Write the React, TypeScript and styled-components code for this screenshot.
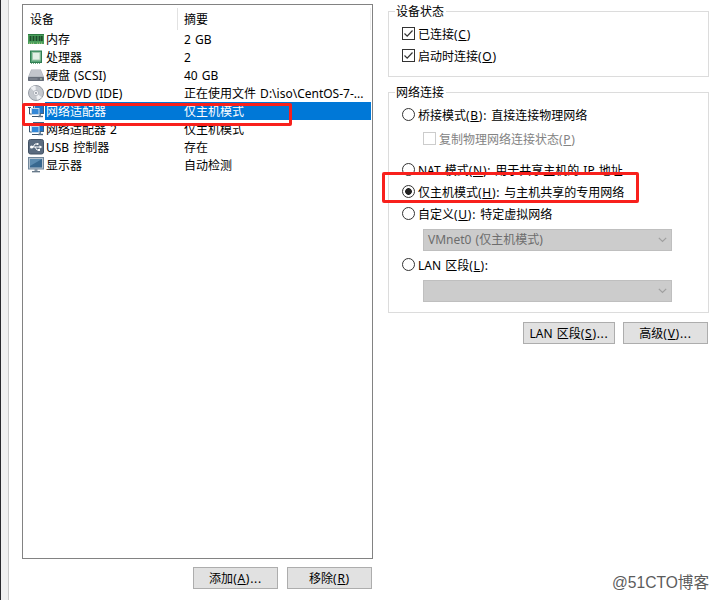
import { useState } from "react";
import type { ReactNode } from "react";
import styled, { createGlobalStyle } from "styled-components";

type Device = { icon: ReactNode; name: string; summary: string };

const MemoryIcon = () => (
  <svg width="16" height="16" viewBox="0 0 16 16">
    <rect x="0" y="3" width="16" height="10" fill="#4a9e5b" />
    <path d="M0 3.5h16" stroke="#2c7a40" />
    <path d="M2.5 5v5M5.5 5v5M8.5 5v5M11.5 5v5M13.8 5v5" stroke="#1d4d2b" strokeWidth="1.8" />
    <path d="M1 12.2h6M9 12.2h6" stroke="#b8cf8c" strokeDasharray="1 1" />
  </svg>
);

const CpuIcon = () => (
  <svg width="16" height="16" viewBox="0 0 16 16">
    <rect x="2.5" y="2" width="11" height="11.5" fill="#5aa678" stroke="#2f7d52" />
    <rect x="4.5" y="3.5" width="7.5" height="7.5" fill="#e3efe6" stroke="#a2c8af" />
    <path d="M3 14.5h10" stroke="#74a987" strokeDasharray="1 1" />
  </svg>
);

const DiskIcon = () => (
  <svg width="16" height="16" viewBox="0 0 16 16">
    <path d="M3.2 2.5h9.6L16 10v3.5H0V10z" fill="#a9aeb7" />
    <path d="M3.6 3h8.8l2.8 6.6H.8z" fill="#c2c5cc" />
    <rect x="0" y="10" width="16" height="4" rx="0.8" fill="#666d79" />
    <path d="M1.5 12h8" stroke="#8e95a0" />
    <path d="M12 12h2" stroke="#b7d8b4" />
  </svg>
);

const DiscIcon = () => (
  <svg width="16" height="16" viewBox="0 0 16 16">
    <circle cx="8" cy="8" r="7.5" fill="#c4c8ce" stroke="#959ba4" />
    <path d="M8 8L2.5 3a7 7 0 0 1 5-2.2zM8 8l5.8 4.2a7 7 0 0 1-4.8 2.6z" fill="#eff1f4" />
    <circle cx="8" cy="8" r="2.6" fill="#f2f3f5" stroke="#a6abb3" strokeWidth="0.7" />
    <circle cx="8" cy="8" r="1" fill="#8f959e" />
  </svg>
);

const NetworkIcon = () => (
  <svg width="16" height="16" viewBox="0 0 16 16">
    <rect x="5.5" y="1.5" width="10" height="9" fill="#1f74c8" stroke="#3d6285" />
    <path d="M6.5 9.5v-7h8" fill="none" stroke="#9fc4e6" />
    <path d="M10 13.5h5" stroke="#48647f" strokeWidth="1.4" />
    <path d="M12 11v2.5" stroke="#6d879f" strokeWidth="2" />
    <rect x="3.5" y="5.5" width="7.5" height="6" fill="#3387d6" stroke="#c3d8ea" />
    <path d="M0 4.5h3M1.5 4.5V11h2M4 13.5h6" fill="none" stroke="#39546e" />
  </svg>
);

const UsbIcon = () => (
  <svg width="16" height="16" viewBox="0 0 16 16">
    <rect x="0.5" y="0.5" width="15" height="14.5" rx="2" fill="#5a6b7f" stroke="#435264" />
    <path d="M3 8h9M5 8l2-3h2M7 8l2 3h2" fill="none" stroke="#fff" />
    <circle cx="3.6" cy="8" r="1.6" fill="#fff" />
    <path d="M11.5 6.2L14.3 8l-2.8 1.8z" fill="#fff" />
    <circle cx="9.6" cy="5" r="1.1" fill="#fff" />
    <rect x="10" y="10" width="2" height="2" fill="#fff" />
  </svg>
);

const DisplayIcon = () => (
  <svg width="16" height="16" viewBox="0 0 16 16">
    <rect x="0.5" y="0.5" width="15" height="11.5" fill="#b6c3cf" stroke="#71879b" />
    <rect x="2" y="2" width="12" height="8.5" fill="#38688f" />
    <path d="M2 2h12L2 9z" fill="#5b8bb0" />
    <path d="M6.5 12h3v2h-3z" fill="#8797a6" />
    <path d="M4 14.7h8" stroke="#5f7283" strokeWidth="1.3" />
  </svg>
);

const devices: Device[] = [
  { icon: <MemoryIcon />, name: "内存", summary: "2 GB" },
  { icon: <CpuIcon />, name: "处理器", summary: "2" },
  { icon: <DiskIcon />, name: "硬盘 (SCSI)", summary: "40 GB" },
  { icon: <DiscIcon />, name: "CD/DVD (IDE)", summary: "正在使用文件 D:\\iso\\CentOS-7-..." },
  { icon: <NetworkIcon />, name: "网络适配器", summary: "仅主机模式" },
  { icon: <NetworkIcon />, name: "网络适配器 2", summary: "仅主机模式" },
  { icon: <UsbIcon />, name: "USB 控制器", summary: "存在" },
  { icon: <DisplayIcon />, name: "显示器", summary: "自动检测" },
];

// access key in brackets, followed by whatever punctuation the label ends with
const Key = ({ children, tail }: { children: string; tail?: string }) => (
  <KeyText>
    (<u>{children}</u>){tail}
  </KeyText>
);

const Check = ({ on, disabled }: { on?: boolean; disabled?: boolean }) => (
  <CheckBox $disabled={disabled}>
    {on && (
      <svg width="11" height="11" viewBox="0 0 11 11">
        <path d="M1.5 5.5l2.7 2.7 5.3-5.7" fill="none" stroke="#333" strokeWidth="1.2" />
      </svg>
    )}
  </CheckBox>
);

const Select = ({ value }: { value?: string }) => (
  <SelectBox>
    <span>{value}</span>
    <svg width="9" height="6" viewBox="0 0 9 6">
      <path d="M0.8 0.8l3.7 3.7 3.7-3.7" fill="none" stroke="#a0a0a0" strokeWidth="1.2" />
    </svg>
  </SelectBox>
);

const App = () => {
  const [selected, setSelected] = useState(4);
  const [mode, setMode] = useState("H");

  return (
    <>
      <GlobalStyle />
      <Dialog>
        <Edge />
        <LeftPane>
          <DeviceList>
            <ListHeader>
              <HeaderName>设备</HeaderName>
              <HeaderSummary>摘要</HeaderSummary>
            </ListHeader>
            {devices.map(({ icon, name, summary }, index) => (
              <DeviceRow key={name} onClick={() => setSelected(index)}>
                <IconCell>{icon}</IconCell>
                <RowText $selected={index === selected}>
                  <NameCell>{name}</NameCell>
                  <span>{summary}</span>
                </RowText>
              </DeviceRow>
            ))}
            <Marker $left={-1} $top={98} $width={270} $height={23} />
          </DeviceList>
          <Actions $top={8}>
            <Button $width={85}>
              添加<Key tail="...">A</Key>
            </Button>
            <Button $width={85}>
              移除<Key>R</Key>
            </Button>
          </Actions>
        </LeftPane>
        <RightPane>
          <Group $height={66}>
            <Legend>设备状态</Legend>
            <Option $top={5}>
              <Check on />
              <span>
                已连接<Key>C</Key>
              </span>
            </Option>
            <Option $top={4}>
              <Check on />
              <span>
                启动时连接<Key>O</Key>
              </span>
            </Option>
          </Group>
          <Group $height={221} $top={15}>
            <Legend>网络连接</Legend>
            <Option $top={5} onClick={() => setMode("B")}>
              <Radio $on={mode === "B"} />
              <span>
                桥接模式<Key tail=":">B</Key> 直接连接物理网络
              </span>
            </Option>
            <Option $top={6} $indent $disabled>
              <Check disabled />
              <span>
                复制物理网络连接状态<Key>P</Key>
              </span>
            </Option>
            <Option $top={13} onClick={() => setMode("N")}>
              <Radio $on={mode === "N"} />
              <span>
                NAT 模式<Key tail=":">N</Key> 用于共享主机的 IP 地址
              </span>
            </Option>
            <Option $top={4} onClick={() => setMode("H")}>
              <Radio $on={mode === "H"} />
              <span>
                仅主机模式<Key tail=":">H</Key> 与主机共享的专用网络
              </span>
            </Option>
            <Option $top={4} onClick={() => setMode("U")}>
              <Radio $on={mode === "U"} />
              <span>
                自定义<Key tail=":">U</Key> 特定虚拟网络
              </span>
            </Option>
            <Select value="VMnet0 (仅主机模式)" />
            <Option $top={6} onClick={() => setMode("L")}>
              <Radio $on={mode === "L"} />
              <span>
                LAN 区段<Key tail=":">L</Key>
              </span>
            </Option>
            <Select />
            <Marker $left={-7} $top={79} $width={257} $height={31} />
          </Group>
          <Actions $top={9} $right={1}>
            <Button $width={92}>
              LAN 区段<Key tail="...">S</Key>
            </Button>
            <Button $width={85}>
              高级<Key tail="...">V</Key>
            </Button>
          </Actions>
        </RightPane>
        <Watermark>@51CTO博客</Watermark>
      </Dialog>
    </>
  );
};

const GlobalStyle = createGlobalStyle`
  * {
    box-sizing: border-box;
  }
  body {
    margin: 0;
    background: #fff;
    color: #000;
    font: 12px/18px "Noto Sans", "Noto Sans CJK SC", sans-serif;
    word-spacing: 1px;
  }
  svg {
    display: block;
    flex: none;
  }
  u {
    text-underline-offset: 1px;
  }
`;

const Dialog = styled.main`
  position: relative;
  display: flex;
  width: 719px;
  height: 600px;
  overflow: hidden;
  white-space: nowrap;
`;

const Edge = styled.div`
  width: 9px;
  background: #f0f0f0;
  border-left: 1px solid #29292d;
  border-right: 1px solid #c9c9c9;
`;

const LeftPane = styled.section`
  width: 364px;
  padding: 4px 1px 0 13px;
`;

const DeviceList = styled.div`
  position: relative;
  width: 351px;
  height: 555px;
  padding: 3px 1px 0 5px;
  border: 1px solid #828282;
`;

const ListHeader = styled.div`
  display: flex;
  height: 22px;
  line-height: 23px;
`;

const HeaderName = styled.div`
  width: 150px;
  padding-left: 2px;
  border-right: 1px solid #e2e2e2;
`;

const HeaderSummary = styled.div`
  flex: 1;
  padding-left: 6px;
  border-right: 1px solid #ececec;
`;

const DeviceRow = styled.div`
  display: flex;
  height: 18px;
  line-height: 20px;
`;

const IconCell = styled.div`
  display: flex;
  align-items: center;
  width: 17px;
`;

const RowText = styled.div<{ $selected: boolean }>`
  display: flex;
  flex: 1;
  padding-left: 1px;
  color: ${({ $selected }) => ($selected ? "#fff" : "#000")};
  background: ${({ $selected }) => ($selected ? "#0078d7" : "transparent")};
`;

const NameCell = styled.span`
  width: 138px;
`;

const RightPane = styled.section`
  width: 336px;
  padding: 11px 0 0 15px;
`;

const Group = styled.div<{ $height: number; $top?: number }>`
  position: relative;
  width: 321px;
  height: ${({ $height }) => $height}px;
  margin-top: ${({ $top = 0 }) => $top}px;
  padding-left: 13px;
  border: 1px solid #dcdcdc;
`;

const Legend = styled.div`
  width: fit-content;
  height: 18px;
  margin: -9px 0 0 -7px;
  padding: 0 2px 0 1px;
  background: #fff;
`;

const Option = styled.label<{ $top: number; $indent?: boolean; $disabled?: boolean }>`
  display: flex;
  align-items: flex-start;
  gap: 3px;
  width: fit-content;
  height: 18px;
  margin-top: ${({ $top }) => $top}px;
  margin-left: ${({ $indent }) => ($indent ? 21 : 0)}px;
  color: ${({ $disabled }) => ($disabled ? "#838383" : "#000")};
`;

const KeyText = styled.span`
  letter-spacing: 0.7px;
`;

const CheckBox = styled.span<{ $disabled?: boolean }>`
  width: 13px;
  height: 13px;
  margin-top: 1px;
  border: 1px solid ${({ $disabled }) => ($disabled ? "#ccc" : "#333")};
`;

const Radio = styled.span<{ $on: boolean }>`
  width: 13px;
  height: 13px;
  margin-top: 1px;
  border: 1px solid #333;
  border-radius: 50%;
  background: ${({ $on }) =>
    $on ? "radial-gradient(circle, #222 3px, #fff 3.7px)" : "#fff"};
`;

const SelectBox = styled.div`
  display: flex;
  align-items: center;
  justify-content: space-between;
  width: 249px;
  height: 22px;
  margin: 5px 0 0 21px;
  padding: 0 4px;
  border: 1px solid #bfbfbf;
  background: #ccc;
  color: #6d6d6d;
`;

const Actions = styled.div<{ $top: number; $right?: number }>`
  display: flex;
  justify-content: flex-end;
  gap: ${({ $right }) => ($right ? 8 : 9)}px;
  margin-top: ${({ $top }) => $top}px;
  padding-right: ${({ $right = 0 }) => $right}px;
`;

const Button = styled.button<{ $width: number }>`
  width: ${({ $width }) => $width}px;
  height: 22px;
  padding: 1px 0 0;
  border: 1px solid #adadad;
  background: #e1e1e1;
  color: #000;
  font: inherit;
  word-spacing: inherit;
`;

const Marker = styled.div<{ $left: number; $top: number; $width: number; $height: number }>`
  position: absolute;
  left: ${({ $left }) => $left}px;
  top: ${({ $top }) => $top}px;
  width: ${({ $width }) => $width}px;
  height: ${({ $height }) => $height}px;
  border: 3px solid #f8201c;
  border-radius: 2px;
  pointer-events: none;
`;

const Watermark = styled.div`
  position: absolute;
  right: 10px;
  bottom: 7px;
  color: #5c5c5c;
  font: 15.6px/20px "Liberation Sans", "Noto Sans CJK SC", sans-serif;
  text-shadow: 1px 1px 0 #fff;
`;

export default App;
